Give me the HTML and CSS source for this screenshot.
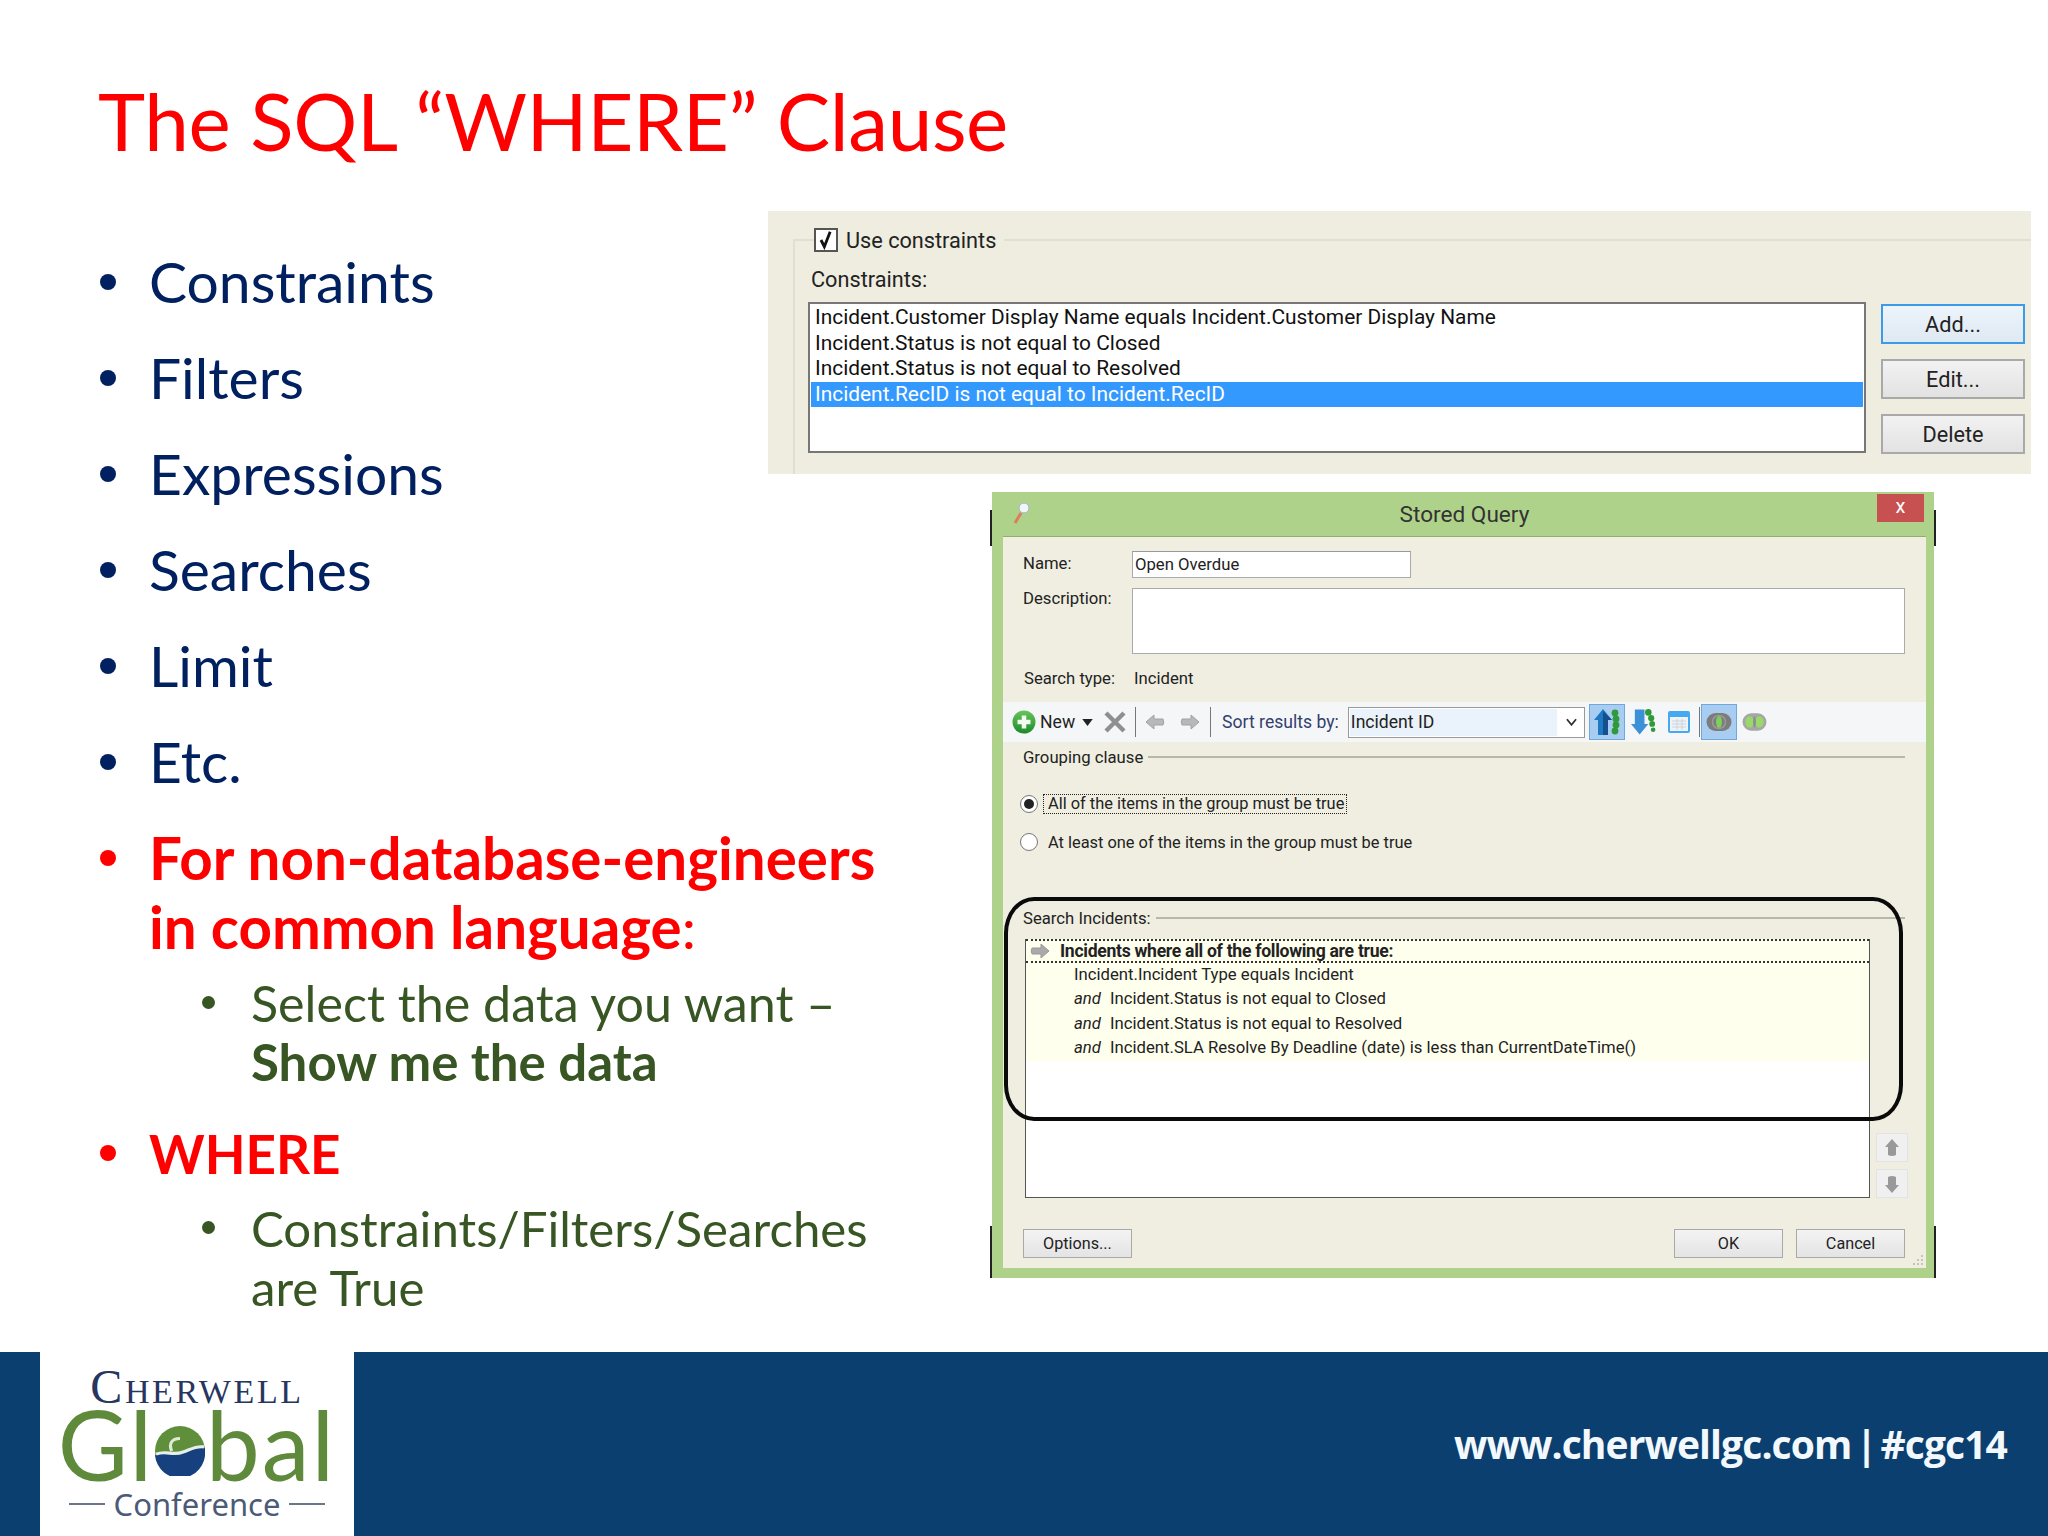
FILE: index.html
```html
<!DOCTYPE html>
<html lang="en">
<head>
<meta charset="utf-8">
<title>The SQL WHERE Clause</title>
<link rel="stylesheet" href="styles.css">
</head>
<body>
<div class="slide">
  <h1 class="title">The SQL “WHERE” Clause</h1>
  <main class="main">
    <ul class="bullets">
      <li class="item">Constraints</li>
      <li class="item">Filters</li>
      <li class="item">Expressions</li>
      <li class="item">Searches</li>
      <li class="item">Limit</li>
      <li class="item">Etc.</li>
      <li class="item item-red"><b class="redbold">For non-database-engineers<br>in common language</b>:
        <ul class="sub"><li>Select the data you want –<br><b class="subbold">Show me the data</b></li></ul>
      </li>
      <li class="item item-red item-where"><b class="where">WHERE</b>
        <ul class="sub sub-where"><li>Constraints/Filters/Searches<br>are True</li></ul>
      </li>
    </ul>
    <div class="shots">
      <section class="cpanel">
        <div class="cgroup">
          <div class="clegend">
            <span class="checkbox"><svg viewBox="0 0 24 24" width="20" height="20"><path d="M6 12l4 8 7-18" fill="none" stroke="#111" stroke-width="3.4"/></svg></span>
            <span>Use constraints</span>
          </div>
          <div class="clabel">Constraints:</div>
          <div class="crow">
            <div class="clist">
              <div class="crowtext">Incident.Customer Display Name equals Incident.Customer Display Name</div>
              <div class="crowtext">Incident.Status is not equal to Closed</div>
              <div class="crowtext">Incident.Status is not equal to Resolved</div>
              <div class="crowtext crowsel">Incident.RecID is not equal to Incident.RecID</div>
            </div>
            <div class="cbtns">
              <button class="cbtn cbtn-focus">Add...</button>
              <button class="cbtn">Edit...</button>
              <button class="cbtn">Delete</button>
            </div>
          </div>
        </div>
      </section>

      <section class="dialog">
        <i class="sliver s1"></i><i class="sliver s2"></i><i class="sliver s3"></i><i class="sliver s4"></i>
        <header class="dtitle">
          <svg class="dicon" viewBox="0 0 20 22" width="20" height="22"><path d="M9 11L3 21" stroke="#d9805a" stroke-width="3"/><circle cx="12" cy="6" r="5" fill="#f2f6fa" stroke="#9db4c8"/></svg>
          <span>Stored Query</span>
          <span class="dclose">x</span>
        </header>
        <div class="dbody">
          <div class="frow frow-name">
            <span class="flabel">Name:</span><div class="finput">Open Overdue</div>
          </div>
          <div class="frow frow-desc">
            <span class="flabel">Description:</span><div class="ftext"></div>
          </div>
          <div class="frow frow-type">
            <span class="flabel">Search type:</span><span>Incident</span>
          </div>
          <div class="toolbar">
            <svg class="ti ti-new" viewBox="0 0 24 24" width="24" height="24"><defs><linearGradient id="gn" x1="0" y1="0" x2="0" y2="1"><stop offset="0" stop-color="#66c65a"/><stop offset="1" stop-color="#1d8a2a"/></linearGradient></defs><circle cx="12" cy="12" r="11.5" fill="url(#gn)"/><path d="M12 5.5v13M5.5 12h13" stroke="#f4fbf0" stroke-width="4.5"/></svg>
            <span class="tnew">New</span>
            <svg class="ti-drop" viewBox="0 0 12 8" width="11" height="7"><path d="M0 0h12L6 8z" fill="#222"/></svg>
            <svg class="ti-x" viewBox="0 0 22 22" width="22" height="22"><path d="M2 2l18 18M20 2L2 20" stroke="#8f8f8f" stroke-width="4.4"/></svg>
            <i class="tsep tsep-a"></i>
            <svg class="ti-l" viewBox="0 0 20 20" width="20" height="20"><path d="M1 10l8-7v4h9q1.500 3 0 6H9v4z" fill="#b8b8b8" stroke="#a2a2a2"/></svg>
            <svg class="ti-r" viewBox="0 0 20 20" width="20" height="20"><path d="M19 10l-8-7v4H2q-1.500 3 0 6h9v4z" fill="#b8b8b8" stroke="#a2a2a2"/></svg>
            <i class="tsep tsep-b"></i>
            <span class="tsort">Sort results by:</span>
            <div class="tcombo"><span class="tcombo-val">Incident ID</span><svg viewBox="0 0 12 8" width="11" height="8"><path d="M1 1l5 6 5-6" fill="none" stroke="#333" stroke-width="2"/></svg></div>
            <span class="tbtn tbtn-on"><svg viewBox="0 0 26 28" width="26" height="28"><path d="M9 1L0 12h4v15h10V12h4z" fill="#1f78c4"/><path d="M9 3v24h5V12h4z" fill="#14508c"/><circle cx="21" cy="5" r="3.400" fill="#2f9a3a"/><circle cx="22" cy="11" r="3.400" fill="#2f9a3a"/><circle cx="22" cy="17" r="3.400" fill="#2f9a3a"/><circle cx="21" cy="23" r="3.400" fill="#2f9a3a"/></svg></span>
            <span class="tbtn tbtn-2"><svg viewBox="0 0 26 28" width="26" height="28"><path d="M9 27L0 16h4V1h10v15h4z" fill="#3b90d8"/><circle cx="18" cy="4" r="3.400" fill="#2f9a3a"/><circle cx="21" cy="10" r="3.200" fill="#2f9a3a"/><circle cx="22" cy="16" r="3" fill="#2f9a3a"/><circle cx="23" cy="22" r="2.400" fill="#2f9a3a"/></svg></span>
            <span class="tbtn tbtn-3"><svg viewBox="0 0 22 24" width="22" height="24"><rect x="1" y="2" width="20" height="20" rx="1" fill="#eef3f8" stroke="#46a8ee" stroke-width="2"/><rect x="1" y="2" width="20" height="5" fill="#46a8ee"/><path d="M4 11h14M4 14h14M4 17h14M9 9v11M14 9v11" stroke="#cdd3dc"/></svg></span>
            <i class="tsep tsep-c"></i>
            <span class="tbtn tbtn-on tbtn-4"><svg viewBox="0 0 26 20" width="26" height="20"><rect x="0.500" y="1" width="25" height="18" rx="9" fill="#7c7c7c"/><ellipse cx="13" cy="10" rx="3" ry="6" fill="#7ed05a"/><ellipse cx="13" cy="10" rx="6.500" ry="6.500" fill="none" stroke="#9a9a9a" stroke-width="1.500"/></svg></span>
            <span class="tbtn tbtn-5"><svg viewBox="0 0 26 20" width="26" height="20"><rect x="0.500" y="1" width="25" height="18" rx="9" fill="#a6a6a6"/><ellipse cx="8" cy="10" rx="4.500" ry="6" fill="#9ad86a"/><ellipse cx="18" cy="10" rx="4.500" ry="6" fill="#9ad86a"/><ellipse cx="13" cy="10" rx="1.500" ry="6" fill="#8e8e8e"/></svg></span>
          </div>
          <div class="groupline gl-clause"><span>Grouping clause</span><i></i></div>
          <div class="radio radio-1"><span class="rdot rdot-on"></span><span class="rfocus">All of the items in the group must be true</span></div>
          <div class="radio radio-2"><span class="rdot"></span><span class="rtext">At least one of the items in the group must be true</span></div>
          <div class="groupline gl-search"><span>Search Incidents:</span><i></i></div>
          <div class="treewrap">
            <div class="tree">
              <div class="tyellow">
                <div class="troot"><svg viewBox="0 0 20 20" width="20" height="20"><path d="M19 10l-8-7v4H2q-1.500 3 0 6h9v4z" fill="#aaa" stroke="#999"/></svg><b>Incidents where all of the following are true:</b></div>
                <div class="tline tline-first">Incident.Incident Type equals Incident</div>
                <div class="tline"><em>and</em>Incident.Status is not equal to Closed</div>
                <div class="tline"><em>and</em>Incident.Status is not equal to Resolved</div>
                <div class="tline"><em>and</em>Incident.SLA Resolve By Deadline (date) is less than CurrentDateTime()</div>
              </div>
            </div>
            <div class="tside">
              <span class="sidebtn"><svg viewBox="0 0 16 20" width="16" height="20"><path d="M8 1l7 8h-3v8q-4 2-8 0V9H1z" fill="#999"/></svg></span>
              <span class="sidebtn"><svg viewBox="0 0 16 20" width="16" height="20"><path d="M8 19l7-8h-3V3q-4-2-8 0v8H1z" fill="#999"/></svg></span>
            </div>
          </div>
          <div class="dfoot">
            <button class="dbtn">Options...</button>
            <span class="dspacer"></span>
            <button class="dbtn">OK</button>
            <button class="dbtn">Cancel</button>
          </div>
          <svg class="grip" viewBox="0 0 15 13" width="15" height="13"><path d="M12 1h2v2h-2zM8 5h2v2H8zM12 5h2v2h-2zM4 9h2v2H4zM8 9h2v2H8zM12 9h2v2h-2z" fill="#c4c4b8"/></svg>
        </div>
        <div class="annot"></div>
      </section>
    </div>
  </main>
  <footer class="footer">
    <div class="logo">
      <div class="logo-c">Cherwell</div>
      <div class="logo-g"><span>Gl</span><svg class="globe" viewBox="0 0 48 48" width="50" height="50"><circle cx="24" cy="24" r="24" fill="#5f8f3b"/><path d="M0 28c10-6 16 2 27-2 8-3 13-7 21-5v3a24 24 0 0 1-48 4z" fill="#17407f"/><path d="M1 27c10-4 16 2 26-2 8-3 12-6 20-5" fill="none" stroke="#e7efe8" stroke-width="3"/><path d="M16 24c-3-7 0-12 8-12" fill="none" stroke="#dfe9d8" stroke-width="3"/></svg><span>bal</span></div>
      <div class="logo-conf"><i></i><span>Conference</span><i></i></div>
    </div>
    <div class="footer-text">www.cherwellgc.com | #cgc14</div>
  </footer>
</div>
</body>
</html>
```
FILE: styles.css
```css
html, body { margin: 0; padding: 0; background: #fff; }
.slide {
  width: 2048px; height: 1536px; display: flex; flex-direction: column;
  font-family: Lato, "Open Sans", sans-serif; overflow: hidden; position: relative;
}
.title {
  margin: 0; height: 211px; flex: none; box-sizing: border-box; padding: 72px 0 0 98px;
  font-size: 80px; line-height: 96px; font-weight: 400; color: #ff0000; letter-spacing: -0.4px;
}
.main { flex: 1; display: flex; min-height: 0; }
.bullets {
  list-style: none; margin: 0; padding: 36px 0 0 149px; width: 768px; flex: none; box-sizing: border-box;
  font-size: 57px; color: #002060;
}
.item { position: relative; line-height: 68px; margin-bottom: 28px; width: 740px; white-space: nowrap; }
.item::before {
  content: ""; position: absolute; left: -49px; top: 27px; width: 16px; height: 16px;
  border-radius: 50%; background: currentColor;
}
.item-red { color: #ff0000; margin-bottom: 0; }
.item-where { margin-top: 27px; }
.redbold { font-size: 58.3px; }
.where { font-size: 53px; }
.sub { list-style: none; margin: 12px 0 0 102px; padding: 0; font-size: 50.2px; line-height: 59px; color: #375623; }
.sub-where { font-size: 49.2px; margin-top: 10px; }
.subbold { font-size: 51px; }
.sub li { position: relative; }
.sub li::before {
  content: ""; position: absolute; left: -49px; top: 23px; width: 13px; height: 13px;
  border-radius: 50%; background: currentColor;
}

.shots { width: 1263px; flex: none; display: flex; flex-direction: column; font-family: Roboto, "Open Sans", sans-serif; color: #222; position: relative; z-index: 1; }

/* constraints panel */
.cpanel { height: 263px; background: #eeede0; box-sizing: border-box; padding: 28px 0 0 25px; flex: none; font-size: 21.7px; }
.cgroup { height: 235px; border-top: 2px solid #e0dfd3; border-left: 2px solid #e0dfd3; box-sizing: border-box; }
.clegend { display: flex; width: fit-content; align-items: center; gap: 8px; height: 24px; margin: -13px 0 0 19px; padding-right: 8px; background: #eeede0; }
.checkbox { width: 24px; height: 24px; box-sizing: border-box; border: 2px solid #555; background: #fff; display: flex; align-items: center; justify-content: center; }
.clabel { margin: 14px 0 0 16px; line-height: 28px; }
.crow { display: flex; margin: 8px 0 0 13px; }
.clist { width: 1058px; height: 151px; box-sizing: border-box; border: 2px solid #777; background: #fff; padding: 1px 1px; flex: none; font-size: 20.9px; }
.crowtext { height: 25.5px; line-height: 25.5px; padding-left: 4px; color: #111; white-space: nowrap; }
.crowsel { background: #3399ff; color: #fff; }
.cbtns { display: flex; flex-direction: column; gap: 15px; margin: 2px 0 0 15px; }
.cbtn { width: 144px; height: 40px; border: 2px solid #a9a9a9; background: linear-gradient(#f2f2f2, #e2e2e2); font: inherit; color: #222; padding: 0; }
.cbtn-focus { border-color: #3c9ae8; background: linear-gradient(#ecf4fb, #dfe9f2); }

/* dialog */
.dialog { position: relative; width: 942px; height: 786px; margin: 18px 0 0 224px; background: #afd28a; box-sizing: border-box; padding: 0 8px 10px 11px; flex: none; display: flex; flex-direction: column; font-size: 16.7px; }
.sliver { position: absolute; background: #222; width: 2px; }
.s1 { left: -2px; top: 18px; height: 36px; }
.s2 { left: -2px; top: 734px; height: 52px; }
.s3 { right: -2px; top: 18px; height: 36px; }
.s4 { right: -2px; top: 734px; height: 52px; }
.dtitle { height: 44px; flex: none; display: flex; align-items: center; justify-content: center; font-size: 22.6px; color: #333; position: relative; }
.dicon { position: absolute; left: 9px; top: 10px; }
.dclose { position: absolute; right: 2px; top: 2px; width: 47px; height: 28px; background: #c75050; color: #fff; text-align: center; line-height: 24px; font-size: 20px; }
.dbody { flex: 1; background: #efeee0; position: relative; border-top: 1px solid #8fae72; display: flex; flex-direction: column; }
.frow { display: flex; align-items: center; padding-left: 20px; }
.flabel { width: 109px; flex: none; }
.frow-name { margin-top: 13px; height: 27px; }
.finput { width: 279px; height: 27px; line-height: 25px; box-sizing: border-box; border: 1px solid #aaa; border-top-color: #999; background: #fff; padding-left: 2px; margin-top: 2px; }
.frow-desc { margin-top: 11px; height: 66px; align-items: flex-start; }
.frow-desc .flabel { line-height: 22px; }
.ftext { width: 773px; height: 66px; box-sizing: border-box; border: 1px solid #aaa; background: #fff; }
.frow-type { margin-top: 13px; height: 22px; }
.frow-type .flabel { padding-left: 1px; width: 110px; }
.toolbar { margin-top: 13px; height: 40px; background: #f5f6f8; display: flex; align-items: center; flex: none; padding-left: 9px; font-size: 17.6px; }
.tnew { margin-left: 4px; }
.ti-drop { margin-left: 7px; }
.ti-x { margin-left: 11px; }
.tsep { width: 1px; height: 30px; background: #777; flex: none; }
.tsep-a { margin-left: 9px; }
.ti-l { margin-left: 9px; }
.ti-r { margin-left: 15px; }
.tsep-b { margin-left: 10px; }
.tsort { margin-left: 11px; color: #33406e; }
.tcombo { margin-left: 9px; width: 237px; height: 31px; box-sizing: border-box; border: 1px solid #999; background: #fff; display: flex; align-items: center; padding: 1px; flex: none; }
.tcombo-val { width: 207px; height: 100%; background: #eaf2fb; line-height: 27px; padding-left: 1px; box-sizing: border-box; color: #222; margin-right: 9px; }
.tbtn { display: flex; align-items: center; justify-content: center; flex: none; height: 36px; width: 25px; }
.tbtn-on { width: 36px; box-sizing: border-box; background: #a9cdf0; border: 1px solid #6fa8dc; margin-left: 4px; }
.tbtn-2 { margin-left: 6px; }
.tbtn-3 { margin-left: 11px; }
.tsep-c { margin-left: 7px; }
.tbtn-4 { margin-left: 1px; }
.tbtn-5 { margin-left: 5px; }
.groupline { display: flex; align-items: center; padding: 0 21px 0 20px; height: 22px; gap: 5px; }
.groupline i { flex: 1; height: 2px; background: #b8b8a8; }
.gl-clause { margin-top: 4px; }
.radio { display: flex; align-items: center; height: 20px; padding-left: 17px; font-size: 16.4px; }
.radio-1 { margin-top: 26px; }
.radio-2 { margin-top: 18px; }
.rdot { width: 18px; height: 18px; box-sizing: border-box; border: 1px solid #777; border-radius: 50%; background: #fff; flex: none; margin-right: 5px; position: relative; }
.rdot-on::after { content: ""; position: absolute; left: 3px; top: 3px; width: 10px; height: 10px; border-radius: 50%; background: #222; }
.rfocus { border: 1px dotted #222; padding: 0 0 0 4px; line-height: 18px; width: 304px; box-sizing: border-box; white-space: nowrap; }
.rtext { padding-left: 5px; white-space: nowrap; }
.gl-search { margin-top: 55px; }
.treewrap { display: flex; margin: 10px 0 0 22px; }
.tree { width: 845px; height: 259px; box-sizing: border-box; border: 1px solid #555; border-top: 0; background: #fff; flex: none; }
.tyellow { background: #ffffee; height: 122px; }
.troot { height: 24px; box-sizing: border-box; border-top: 2px dotted #333; border-bottom: 2px dotted #333; display: flex; align-items: center; gap: 10px; padding-left: 4px; font-size: 17.6px; }
.troot b { letter-spacing: -0.3px; }
.tline { height: 24.4px; line-height: 24px; padding-left: 48px; white-space: nowrap; }
.tline em { display: inline-block; width: 36px; }
.tside { margin-left: 6px; display: flex; flex-direction: column; justify-content: flex-end; gap: 7px; }
.sidebtn { width: 32px; height: 29px; background: #f0f0f0; border: 1px solid #e3e3e3; box-sizing: border-box; display: flex; align-items: center; justify-content: center; }
.dfoot { display: flex; margin: 31px 21px 0 20px; gap: 13px; font-size: 16.2px; }
.dspacer { flex: 1; }
.dbtn { width: 109px; height: 29px; border: 1px solid #a9a9a9; background: linear-gradient(#f3f3f3, #e4e4e4); font: inherit; color: #222; padding: 0; }
.grip { position: absolute; right: 2px; bottom: 1px; }
.annot { position: absolute; left: 12px; top: 405px; width: 899px; height: 224px; box-sizing: border-box; border: 4px solid #0a0a0a; border-radius: 30px / 36px; pointer-events: none; }

/* footer */
.footer { height: 184px; flex: none; background: #0b3f70; display: flex; align-items: stretch; justify-content: space-between; padding-left: 40px; }
.logo { width: 314px; background: #fff; display: flex; flex-direction: column; align-items: center; box-sizing: border-box; padding-top: 14px; }
.logo-c { font-family: "Liberation Serif", serif; font-variant: small-caps; font-size: 48px; line-height: 42px; color: #27365f; letter-spacing: 2.6px; }
.logo-g { display: flex; align-items: center; font-family: Lato, sans-serif; font-weight: 400; font-size: 96px; line-height: 78px; height: 72px; color: #5f8a3c; letter-spacing: 2px; }
.globe { margin: 14px 1px 0; }
.logo-conf { display: flex; align-items: center; gap: 9px; font-family: "Noto Sans", sans-serif; font-size: 31px; line-height: 34px; color: #4a5a78; margin-top: 7px; }
.logo-conf i { width: 36px; height: 2px; background: #6b768c; }
.footer-text { align-self: flex-start; margin: 67px 41px 0 0; font-family: "Open Sans", sans-serif; font-weight: 700; font-size: 39px; line-height: 50px; color: #f2f8fc; letter-spacing: -0.9px; word-spacing: -5px; }
```
